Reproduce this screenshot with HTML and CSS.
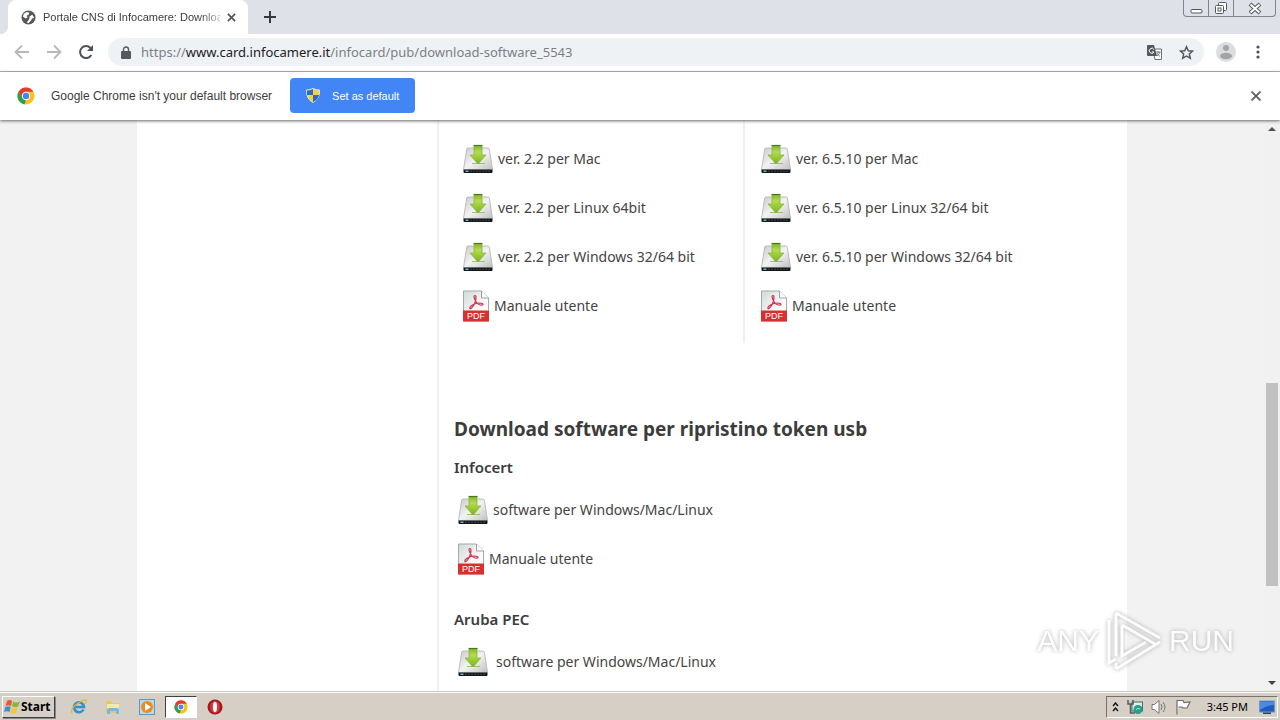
FILE: index.html
```
<!DOCTYPE html>
<html lang="it">
<head>
<meta charset="utf-8">
<title>Portale CNS di Infocamere: Download software</title>
<link rel="stylesheet" href="styles.css">
</head>
<body>
<svg class="defs" aria-hidden="true">
  <defs>
    <linearGradient id="metal" x1="0" y1="0" x2="1" y2="1"><stop offset="0" stop-color="#c9cac9"/><stop offset=".5" stop-color="#f3f3f3"/><stop offset="1" stop-color="#bfc0c0"/></linearGradient>
    <linearGradient id="green" x1="0" y1="0" x2="0" y2="1"><stop offset="0" stop-color="#7fb52a"/><stop offset=".35" stop-color="#b5dc4c"/><stop offset="1" stop-color="#78b51c"/></linearGradient>
    <linearGradient id="paper" x1="0" y1="0" x2="1" y2="1"><stop offset="0" stop-color="#cfdad9"/><stop offset=".6" stop-color="#fafafa"/><stop offset="1" stop-color="#fff"/></linearGradient>
  </defs>
  <symbol id="drive" viewBox="0 0 30 30">
    <path d="M5 4h20q1 0 1.300 1L29.500 25.500H.5L3.700 5Q4 4 5 4z" fill="url(#metal)" stroke="#b0b0b0" stroke-width=".8"/>
    <path d="M.5 25.500h29v2.500q0 1-1 1H1.500q-1 0-1-1z" fill="#14181b"/>
    <path d="M2.500 27.200h3" stroke="#7ecbe8" stroke-width="1.300"/><path d="M7 27.200h20" stroke="#46505a" stroke-dasharray="2 1" stroke-width=".8"/>
    <path d="M9 19.500h13" stroke="#9fbf70"/>
    <path d="M11 1.500h8V11h4l-8 9-8-9h4z" fill="url(#green)" stroke="#83ad45" stroke-width=".7"/>
    <path d="M10.500 1.500h9" stroke="#47781c" stroke-width="1.200"/>
  </symbol>
  <symbol id="sheet" viewBox="0 0 26 31">
    <path d="M.5.5h18l7 7v23H.5z" fill="url(#paper)" stroke="#a5a9a9"/>
    <path d="M18.500.5v7h7" fill="#fff" stroke="#9aa3a3"/>
    <path d="M12 5c-2 0-.5 4 1.500 7s6 3 6.500 2-3-2-7-1-7 4-6 5 4-3 5-6 1.500-7 0-7z" fill="none" stroke="#cf3450" stroke-width="1.200"/>
    <path d="M0 20h26v11H0z" fill="#d9302f"/>
    <text x="13" y="28.500" text-anchor="middle" class="pdf-label">PDF</text>
  </symbol>
  <symbol id="chrome" viewBox="0 0 18 18">
    <circle cx="9" cy="9" r="8.500" fill="#fbc116"/>
    <path d="M1.600 4.800A8.500 8.500 0 0 1 16.400 4.800H9L5.400 11z" fill="#e33b2e"/>
    <path d="M1.600 4.800L5.500 11 9 13l-1.500 4.400A8.500 8.500 0 0 1 1.600 4.800z" fill="#2da04e"/>
    <circle cx="9" cy="9" r="4.200" fill="#fff"/><circle cx="9" cy="9" r="3.200" fill="#4386f5"/>
  </symbol>
</svg>

<div class="screen">
  <header class="tabstrip">
    <div class="tab">
      <svg class="i15" viewBox="0 0 16 16"><circle cx="8" cy="8" r="7.500" fill="#54585d"/><path d="M3 4l3-2 3 1-1 2-2 1 1 2-2 1-3-2zM9 7l3-2 2 3-2 1-2 3-2 2-2-1 2-2 1-2z" fill="#fff"/></svg>
      <span class="tab-title">Portale CNS di Infocamere: Downloa</span>
      <button class="plain" aria-label="Chiudi scheda"><svg class="i9" viewBox="0 0 10 10"><path d="M1 1l8 8M9 1L1 9" stroke="#4e5257" stroke-width="1.800"/></svg></button>
    </div>
    <button class="plain new-tab" aria-label="Nuova scheda"><svg class="i12" viewBox="0 0 12 12"><path d="M6 0v12M0 6h12" stroke="#35393d" stroke-width="2"/></svg></button>
    <div class="window-buttons">
      <button aria-label="Riduci"><svg width="13" height="14" viewBox="0 0 13 14"><rect x="1" y="8.500" width="11" height="3.500" rx="1" fill="#fff" stroke="#54585f"/></svg></button>
      <button aria-label="Ripristina"><svg width="14" height="14" viewBox="0 0 14 14" fill="#fff" stroke="#54585f"><rect x="4.500" y="1.500" width="8" height="8" rx="1"/><rect x="1.500" y="4.500" width="8" height="8" rx="1"/><rect x="4" y="7" width="3" height="3"/></svg></button>
      <button class="wide" aria-label="Chiudi"><svg width="14" height="13" viewBox="0 0 14 13"><path d="M2 2l10 9M12 2L2 11" stroke="#54585f" stroke-width="4"/><path d="M2.500 2.500l9 8M11.500 2.500l-9 8" stroke="#fff" stroke-width="2"/></svg></button>
    </div>
  </header>

  <nav class="toolbar">
    <button class="plain" aria-label="Indietro"><svg class="i16" viewBox="0 0 16 16"><path d="M15 8H2M8 1.500L1.500 8 8 14.500" fill="none" stroke="#b6b8ba" stroke-width="1.800"/></svg></button>
    <button class="plain" aria-label="Avanti"><svg class="i16" viewBox="0 0 16 16"><path d="M1 8h13M8 1.500L14.500 8 8 14.500" fill="none" stroke="#b6b8ba" stroke-width="1.800"/></svg></button>
    <button class="plain" aria-label="Ricarica"><svg class="i16" viewBox="0 0 16 16"><path d="M13.300 11A6 6 0 1 1 12.500 4" fill="none" stroke="#4f5357" stroke-width="2"/><path d="M15 1v6H9z" fill="#4f5357"/></svg></button>
    <div class="address">
      <svg class="lock" viewBox="0 0 10 13"><rect y="5" width="10" height="8" rx="1" fill="#54585d"/><path d="M2.500 6V3.500a2.500 2.500 0 0 1 5 0V6" fill="none" stroke="#54585d" stroke-width="1.400"/></svg>
      <span class="url">https://<b>www.card.infocamere.it</b>/infocard/pub/download-software_5543</span>
      <button class="plain" aria-label="Traduci"><svg class="i15" viewBox="0 0 15 15"><path d="M6 4h8.500v10.500H8z" fill="#fff" stroke="#6b6f74"/><path d="M0 1q0-1 1-1h6l3 11H1q-1 0-1-1z" fill="#54585d"/><path d="M7 4.500A2.500 2.500 0 1 0 7 7H5" fill="none" stroke="#fff"/><path d="M9 7h4.500M11 6v1.500M13 7q-1 3-3 4M10 8q1 2 3 3.500" fill="none" stroke="#6b6f74" stroke-width=".9"/></svg></button>
      <button class="plain" aria-label="Preferiti"><svg class="i15" viewBox="0 0 16 16"><path d="M8 1.800l1.900 4.300 4.600.4-3.500 3 1.100 4.600L8 11.700l-4.100 2.400L5 9.500l-3.500-3 4.600-.4z" fill="none" stroke="#4f5357" stroke-width="1.500"/></svg></button>
    </div>
    <button class="plain" aria-label="Profilo"><svg class="i20" viewBox="0 0 20 20"><circle cx="10" cy="10" r="10" fill="#dcdddf"/><circle cx="10" cy="6" r="3" fill="#a2a4a7"/><ellipse cx="10" cy="14" rx="6" ry="3.200" fill="#a2a4a7"/></svg></button>
    <button class="plain menu" aria-label="Menu"><svg width="4" height="14" viewBox="0 0 4 14" fill="#4f5357"><circle cx="2" cy="2" r="1.600"/><circle cx="2" cy="7" r="1.600"/><circle cx="2" cy="12" r="1.600"/></svg></button>
  </nav>

  <div class="infobar">
    <svg class="i18"><use href="#chrome"/></svg>
    <span class="infobar-text">Google Chrome isn't your default browser</span>
    <button class="set-default">
      <svg width="14" height="15" viewBox="0 0 14 15"><path d="M7 .5Q10 2 13.500 2 14 11 7 14.500 0 11 .5 2 4 2 7 .5z" fill="#f8d23c" stroke="#dde3ea"/><path d="M7 1Q4 2.500 1 2.500V7h6zM7 7h6q-.8 5-6 7z" fill="#2c6cc0"/></svg>
      Set as default
    </button>
    <button class="plain push" aria-label="Chiudi avviso"><svg class="i10" viewBox="0 0 10 10"><path d="M.5.5l9 9M9.500.5l-9 9" stroke="#5b5e62" stroke-width="1.800"/></svg></button>
  </div>

  <div class="viewport">
    <div class="canvas">
      <div class="page">
        <main class="content">
          <div class="columns">
            <ul class="downloads">
              <li><a href="#"><svg class="drive"><use href="#drive"/></svg>ver. 2.2 per Mac</a></li>
              <li><a href="#"><svg class="drive"><use href="#drive"/></svg>ver. 2.2 per Linux 64bit</a></li>
              <li><a href="#"><svg class="drive"><use href="#drive"/></svg>ver. 2.2 per Windows 32/64 bit</a></li>
              <li><a href="#"><svg class="sheet"><use href="#sheet"/></svg>Manuale utente</a></li>
            </ul>
            <ul class="downloads second">
              <li><a href="#"><svg class="drive"><use href="#drive"/></svg>ver. 6.5.10 per Mac</a></li>
              <li><a href="#"><svg class="drive"><use href="#drive"/></svg>ver. 6.5.10 per Linux 32/64 bit</a></li>
              <li><a href="#"><svg class="drive"><use href="#drive"/></svg>ver. 6.5.10 per Windows 32/64 bit</a></li>
              <li><a href="#"><svg class="sheet"><use href="#sheet"/></svg>Manuale utente</a></li>
            </ul>
          </div>
          <section class="recovery">
            <h2>Download software per ripristino token usb</h2>
            <h3>Infocert</h3>
            <ul class="links">
              <li><a href="#"><svg class="drive"><use href="#drive"/></svg>software per Windows/Mac/Linux</a></li>
              <li><a href="#"><svg class="sheet"><use href="#sheet"/></svg>Manuale utente</a></li>
            </ul>
            <h3>Aruba PEC</h3>
            <ul class="links">
              <li><a href="#" class="spaced"><svg class="drive"><use href="#drive"/></svg>software per Windows/Mac/Linux</a></li>
            </ul>
          </section>
        </main>
      </div>
    </div>
    <div class="scrollbar" aria-hidden="true">
      <svg width="8" height="4" viewBox="0 0 8 4"><path d="M0 4l4-4 4 4z" fill="#505050"/></svg>
      <div class="track"><div class="thumb"></div></div>
      <svg width="8" height="4" viewBox="0 0 8 4"><path d="M0 0l4 4 4-4z" fill="#404040"/></svg>
    </div>
    <div class="watermark">
      <span>ANY</span>
      <svg width="58" height="62" viewBox="0 0 58 62" fill="none" stroke="#fff" stroke-width="3"><path d="M11 3v43M11 3L55 28M17 15l33 19M4 10v43l7-4M11 59l44-27M17 15v31l24-14M11 53v6"/></svg>
      <span>RUN</span>
    </div>
  </div>

  <footer class="taskbar">
    <button class="start"><svg width="17" height="16" viewBox="0 0 17 16"><path d="M3 2q3-2 5 0L7 7Q4 5.500 1.500 7z" fill="#e9572b"/><path d="M9 2.500q3 2 7 0l-2 5Q11 9 8 7.300z" fill="#7fbb3a"/><path d="M1.300 8q3-1.500 5.400 0l-1.200 5Q3 11.500 0 13z" fill="#3f8fdc"/><path d="M7.700 8.500q3 1.500 6 0L12 14q-3 1.500-5.500-.5z" fill="#f6c632"/></svg>Start</button>
    <div class="pinned">
      <button class="plain" aria-label="Internet Explorer"><svg class="i16" viewBox="0 0 16 16"><path d="M12.500 10.500A5 5 0 1 1 13 8H4" fill="none" stroke="#2d91d8" stroke-width="2.600"/><path d="M1 14Q-1 10 6 5T15 1q1 1-1 4" fill="none" stroke="#e6b82d" stroke-width="1.300"/></svg></button>
      <button class="plain" aria-label="Esplora file"><svg class="i16" viewBox="0 0 16 16"><path d="M1 2h5l1 2h7v10H1z" fill="#e9c85c"/><path d="M2 5h12v6H2z" fill="#f9eaa5"/><path d="M2 15v-4q0-2 2-2h8q2 0 2 2v4h-3v-3H5v3z" fill="#76b8df"/></svg></button>
      <button class="plain" aria-label="Media Player"><svg class="i16" viewBox="0 0 16 16"><rect x=".5" y=".5" width="15" height="15" fill="#b9d9ef" stroke="#5a9aca"/><circle cx="8" cy="8" r="6" fill="#f18a1d"/><path d="M6 4l6 4-6 4z" fill="#fff"/></svg></button>
      <button class="active" aria-label="Google Chrome"><svg class="i14" viewBox="0 0 18 18"><use href="#chrome" width="18" height="18"/></svg></button>
      <button class="plain" aria-label="Opera"><svg class="i16" viewBox="0 0 16 16"><circle cx="8" cy="8" r="7.500" fill="#a8141a"/><ellipse cx="8" cy="8" rx="5" ry="6" fill="#d23a3e"/><ellipse cx="8" cy="8" rx="2" ry="5.200" fill="#fff"/></svg></button>
    </div>
    <div class="tray">
      <svg width="7" height="10" viewBox="0 0 7 10"><path d="M1 4l2.500-3L6 4M1 9l2.500-3L6 9" fill="none" stroke="#111" stroke-width="1.400"/></svg>
      <svg class="i16" viewBox="0 0 16 16"><rect x="5" y="3" width="10.500" height="9" fill="#d8f0ea" stroke="#4b6a68"/><path d="M1 1v4h5V1M3.500 5v9H8" fill="none" stroke="#5a5a56" stroke-width="1.500"/><circle cx="11" cy="10.500" r="4.500" fill="#2a9d8c"/><path d="M9 11q1-3 4-1" stroke="#b8e4d4" fill="none"/></svg>
      <svg class="i16" viewBox="0 0 16 16" fill="none" stroke="#77756f"><path d="M1 5.500h2.500L8 1.500v13l-4.500-4H1z" fill="#fff"/><path d="M10 5q2 3 0 6M12 3q4 5 0 10"/></svg>
      <svg class="i16" viewBox="0 0 16 16"><path d="M2 15.500V1.500h6l1 2 6-.5-3 6H8L7 8H3.500" fill="#fff" stroke="#6e6c66" stroke-width="1.200"/></svg>
      <time>3:45 PM</time>
      <svg class="i16" viewBox="0 0 16 16"><rect x=".5" y="2" width="15" height="11" fill="#1e5cbf" stroke="#7397c7"/><path d="M1 3h14v3Q8 6 1 11z" fill="#4c8ae0"/><path d="M4 13.500h8v1.500H4z" fill="#283b5c"/></svg>
    </div>
  </footer>
</div>
</body>
</html>
```
FILE: styles.css
```
* { box-sizing: border-box; }
body { margin: 0; font-family: "Noto Sans", sans-serif; color: #3c3c3c; }
ul { list-style: none; margin: 0; padding: 0; }
h2, h3 { margin: 0; }
button { font: inherit; border: 0; padding: 0; }
svg { flex: none; display: block; }
.defs { position: absolute; width: 0; height: 0; }
.plain { background: none; display: flex; align-items: center; justify-content: center; }
.i9 { width: 9px; height: 9px; }
.i10 { width: 10px; height: 10px; }
.i12 { width: 12px; height: 12px; }
.i14 { width: 14px; height: 14px; }
.i15 { width: 15px; height: 15px; }
.i16 { width: 16px; height: 16px; }
.i18 { width: 18px; height: 18px; }
.i20 { width: 20px; height: 20px; }
.screen { height: 100vh; display: flex; flex-direction: column; overflow: hidden; }

.tabstrip { height: 34px; flex: none; display: flex; background: #dee1e7; }
.tabstrip::before { content: ""; width: 8px; background: radial-gradient(circle at 0 26px, transparent 8px, #fff 8px); clip-path: inset(26px 0 0 0); }
.tab { width: 240px; display: flex; align-items: center; gap: 7px; padding: 0 12px 0 13px; background: #fff; border-radius: 8px 8px 0 0; }
.tab-title { flex: 1; overflow: hidden; white-space: nowrap; font: 11px/18px "Liberation Sans", sans-serif; mask-image: linear-gradient(to right, #000 88%, rgba(0, 0, 0, .3)); }
.new-tab { padding: 0 16px; }
.window-buttons { display: flex; height: 17px; margin: 0 4px 0 auto; border: 1px solid #80848d; border-top: 0; border-radius: 0 0 4px 4px; }
.window-buttons button { width: 25px; display: flex; align-items: center; justify-content: center; background: none; border-right: 1px solid #80848d; }
.window-buttons .wide { width: 41px; border-right: 0; }

.toolbar { height: 38px; flex: none; display: flex; align-items: center; gap: 16px; padding: 0 20px 1px 14px; background: #fff; border-bottom: 1px solid #adb0b2; }
.address { flex: 1; height: 28px; display: flex; align-items: center; gap: 17px; margin: 0 -4px 0 -2px; padding: 0 10px 0 13px; border-radius: 14px; background: #eff2f5; }
.lock { width: 10px; height: 13px; }
.url { flex: 1; font-size: 13px; color: #7b8085; margin-left: -7px; white-space: nowrap; }
.url b { font-weight: 400; color: #202124; }
.menu { margin-left: 4px; }

.infobar { height: 48px; flex: none; display: flex; align-items: center; padding: 0 19px 1px 17px; background: #fff; z-index: 1; box-shadow: 0 1px 3px #666; }
.infobar-text { margin: 0 18px 0 16px; font: 12px/18px "Liberation Sans", sans-serif; }
.set-default { height: 35px; display: flex; align-items: center; gap: 12px; padding: 0 16px; border-radius: 4px; background: #4285f4; color: #fff; font: 11px/16px "Liberation Sans", sans-serif; }
.push { margin-left: auto; }

.viewport { flex: 1; min-height: 0; display: flex; position: relative; }
.canvas { flex: 1; overflow: hidden; background: #f2f2f2; }
.page { max-width: 990px; min-height: 100%; margin: 0 auto; padding-left: 300px; background: #fff; }
.content { border-left: 2px solid #f0f0f0; min-height: 572px; font-size: 14px; }
.columns { display: flex; }
.downloads { width: 306px; padding: 14px 0 13px 24px; border-right: 2px solid #f0f0f0; }
.second { width: auto; flex: 1; padding-left: 16px; border: 0; }
li { height: 49px; display: flex; align-items: center; }
a { display: flex; align-items: center; gap: 5px; color: #444; text-decoration: none; }
.spaced { gap: 8px; }
.drive { width: 30px; height: 30px; }
.sheet { width: 26px; height: 32px; }
.pdf-label { font: 9px "Liberation Sans", sans-serif; fill: #fff; }
.recovery { padding: 72px 15px 0; }
h2 { font-size: 19px; line-height: 28px; }
h3 { font-size: 15px; line-height: 24px; margin-top: 12px; font-weight: 600; }
.links { padding: 6px 0 0 4px; }
.links + h3 { margin-top: 24px; }

.scrollbar { width: 16px; display: flex; flex-direction: column; align-items: center; padding: 7px 0; background: #f1f1f1; }
.track { flex: 1; width: 12px; padding-top: 252px; }
.thumb { height: 203px; background: #c1c1c1; }
.watermark { position: absolute; right: 46px; bottom: 20px; display: flex; align-items: center; gap: 6px; color: #fff; font: 30px "Liberation Sans", sans-serif; filter: drop-shadow(0 0 2px #999); opacity: .8; }

.taskbar { height: 28px; flex: none; display: flex; align-items: center; background: #d5cfc6; border-top: 1px solid #fff; outline: 1px solid #cac6be; z-index: 1; color: #000; }
.start { height: 22px; display: flex; align-items: center; margin-left: 2px; padding: 0 3px 0 1px; background: #d5cfc6; border: 1px solid; border-color: #fff #404040 #404040 #fff; box-shadow: 1px 1px 0 #888; font-size: 12px; line-height: 16px; font-weight: 700; }
.pinned { display: flex; align-items: center; gap: 18px; margin-left: 16px; }
.active { width: 32px; height: 22px; display: flex; align-items: center; justify-content: center; margin: 0 -8px; background: #fff; border: 1px solid; border-color: #404040 #fff #fff #404040; }
.tray { height: 22px; display: flex; align-items: center; gap: 8px; margin: 0 2px 0 auto; padding: 0 2px 0 5px; border: 1px solid; border-color: #77736c #fff #fff #77736c; font-size: 11px; }
.tray time { margin: 0 3px 0 8px; }
```
